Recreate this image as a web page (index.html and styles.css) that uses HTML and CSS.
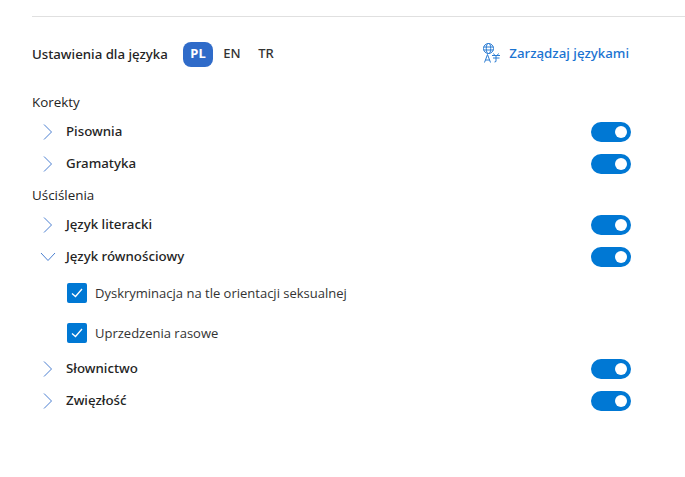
FILE: index.html
```html
<!DOCTYPE html>
<html lang="pl">
<head>
  <meta charset="UTF-8" />
  <title>Ustawienia dla języka</title>
  <link rel="stylesheet" href="styles.css">
</head>
<body>
  <div class="container">
    <div class="lang-bar">
      <span class="lang-title">Ustawienia dla języka</span>
      <div class="lang-tabs">
        <span class="lang-tab active">PL</span>
        <span class="lang-tab">EN</span>
        <span class="lang-tab">TR</span>
      </div>
      <a class="manage-link">
        <svg class="manage-icon" width="19" height="20" viewBox="0 0 18 20" fill="none" stroke="#2b7cd3" stroke-width="1">
          <circle cx="6" cy="5.500" r="5" />
          <ellipse cx="6" cy="5.500" rx="2.200" ry="5" />
          <path d="M1 4h10M1 7h10" />
          <path d="M2 19.500L5 11.500L8 19.500M3 17h4" />
          <path d="M9.500 12.500h8M11 10.500l1 1.500M16 10.500l-1 1.500M10.500 15h6.500M13.500 13v5.500l-1.500 .5" />
        </svg>
        Zarządzaj językami
      </a>
    </div>

    <div class="group-title first">Korekty</div>
    <div class="row">
      <svg class="chevron" width="12" height="16" viewBox="0 0 12 16"><path d="M2 .5l7.500 7.500L2 15.500" /></svg>
      <span class="row-label">Pisownia</span>
      <span class="switch"></span>
    </div>
    <div class="row">
      <svg class="chevron" width="12" height="16" viewBox="0 0 12 16"><path d="M2 .5l7.500 7.500L2 15.500" /></svg>
      <span class="row-label">Gramatyka</span>
      <span class="switch"></span>
    </div>

    <div class="group-title">Uściślenia</div>
    <div class="row">
      <svg class="chevron" width="12" height="16" viewBox="0 0 12 16"><path d="M2 .5l7.500 7.500L2 15.500" /></svg>
      <span class="row-label">Język literacki</span>
      <span class="switch"></span>
    </div>
    <div class="row">
      <svg class="chevron open" width="16" height="10" viewBox="0 0 16 10"><path d="M1 1l7 7.500L15 1" /></svg>
      <span class="row-label">Język równościowy</span>
      <span class="switch"></span>
    </div>
    <div class="checks">
      <label class="check-row">
        <span class="checkbox"><svg width="12" height="10" viewBox="0 0 12 10"><path d="M1 5.500l3.500 3L11 1" /></svg></span>
        Dyskryminacja na tle orientacji seksualnej
      </label>
      <label class="check-row">
        <span class="checkbox"><svg width="12" height="10" viewBox="0 0 12 10"><path d="M1 5.500l3.500 3L11 1" /></svg></span>
        Uprzedzenia rasowe
      </label>
    </div>
    <div class="row">
      <svg class="chevron" width="12" height="16" viewBox="0 0 12 16"><path d="M2 .5l7.500 7.500L2 15.500" /></svg>
      <span class="row-label">Słownictwo</span>
      <span class="switch"></span>
    </div>
    <div class="row">
      <svg class="chevron" width="12" height="16" viewBox="0 0 12 16"><path d="M2 .5l7.500 7.500L2 15.500" /></svg>
      <span class="row-label">Zwięzłość</span>
      <span class="switch"></span>
    </div>
  </div>
</body>
</html>
```
FILE: styles.css
```css
body {
  margin: 0;
  font-family: 'Open Sans', 'Noto Sans', sans-serif;
  font-size: 13px;
  color: #242424;
  background: white;
}

.container {
  margin-left: 32px;
  margin-top: 16px;
  border-top: 1px solid #e0e0e0;
  padding-right: 54px;
  padding-top: 25px;
}

.lang-bar {
  display: flex;
  align-items: center;
  height: 25px;
}

.lang-title {
  font-family: 'Noto Sans', sans-serif;
  font-size: 13.25px;
  font-weight: 500;
  width: 151px;
  padding-bottom: 2px;
}

.lang-tabs {
  display: flex;
  gap: 4px;
}

.lang-tab {
  width: 30px;
  height: 25px;
  line-height: 23px;
  text-align: center;
  font-family: 'Noto Sans', sans-serif;
  font-weight: 500;
  color: #333;
}

.lang-tab.active {
  background: #2f6bc9;
  color: white;
  border-radius: 8px;
  font-weight: 700;
}

.manage-link {
  margin-left: auto;
  margin-right: 2px;
  display: flex;
  align-items: center;
  gap: 8px;
  padding-bottom: 3px;
  color: #1a73d1;
  font-family: 'Noto Sans', sans-serif;
  font-size: 13.3px;
  font-weight: 500;
}

.group-title {
  margin-top: 4px;
  height: 25px;
  line-height: 23px;
  font-size: 13.4px;
}

.group-title.first {
  margin-top: 23px;
  height: 26px;
  line-height: 25px;
}

.row {
  display: flex;
  align-items: center;
  height: 32px;
}

.chevron {
  margin-left: 10px;
  margin-right: 12px;
  fill: none;
  stroke: #4a7fd0;
  stroke-width: 1;
}

.chevron.open {
  margin-left: 8px;
  margin-right: 10px;
}

.row-label {
  font-family: 'Noto Sans', sans-serif;
  font-size: 13.3px;
  font-weight: 500;
  padding-bottom: 2px;
}

.switch {
  margin-left: auto;
  width: 40px;
  height: 20px;
  border-radius: 10px;
  background: #0078d4;
  position: relative;
}

.switch::after {
  content: "";
  position: absolute;
  right: 4px;
  top: 4px;
  width: 12px;
  height: 12px;
  border-radius: 50%;
  background: white;
}

.checks {
  padding-left: 35px;
}

.check-row {
  display: flex;
  align-items: center;
  gap: 8px;
  height: 40px;
  color: #333;
}

.checkbox {
  width: 20px;
  height: 20px;
  border-radius: 2px;
  background: #0078d4;
  display: flex;
  align-items: center;
  justify-content: center;
}

.checkbox svg {
  fill: none;
  stroke: white;
  stroke-width: 1.3;
}
```
